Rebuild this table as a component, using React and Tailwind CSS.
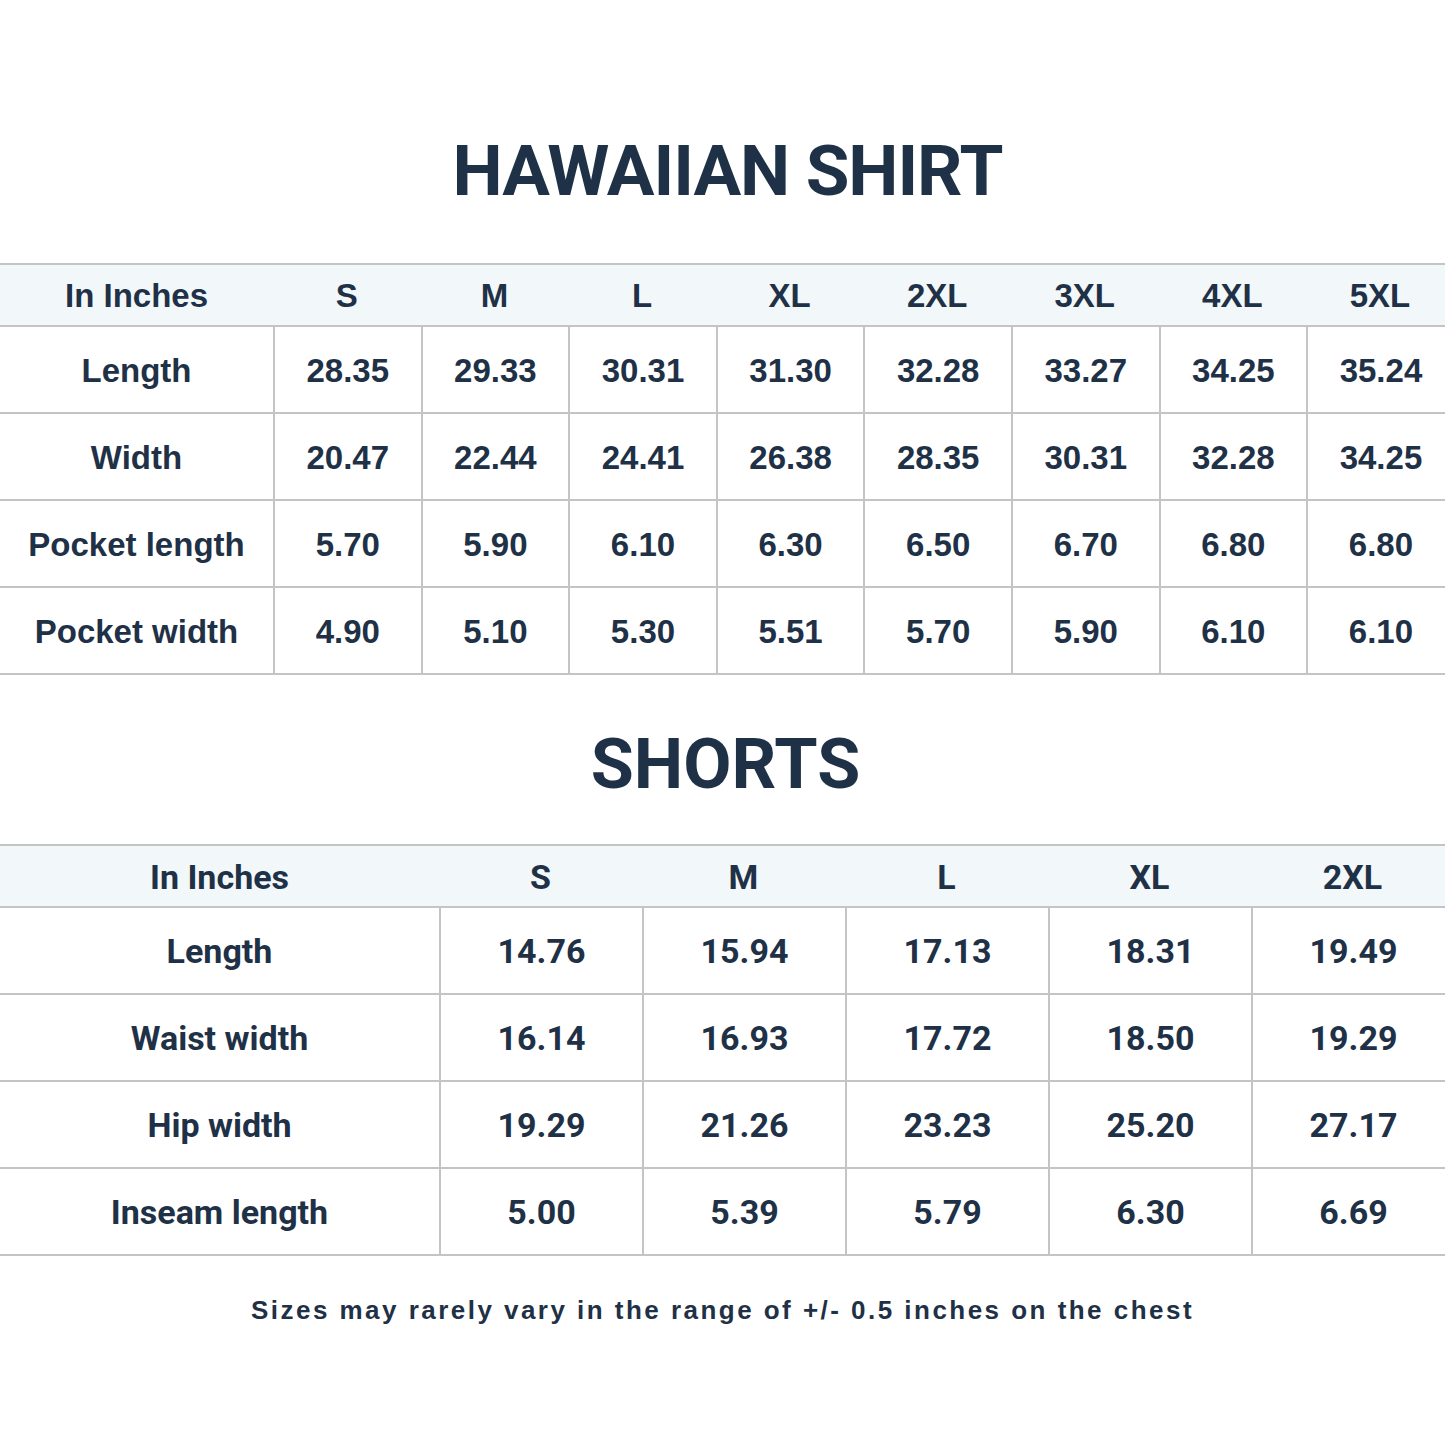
const shirtSizes = ['S', 'M', 'L', 'XL', '2XL', '3XL', '4XL', '5XL'];
const shirtRows = [
  ['Length', ['28.35', '29.33', '30.31', '31.30', '32.28', '33.27', '34.25', '35.24']],
  ['Width', ['20.47', '22.44', '24.41', '26.38', '28.35', '30.31', '32.28', '34.25']],
  ['Pocket length', ['5.70', '5.90', '6.10', '6.30', '6.50', '6.70', '6.80', '6.80']],
  ['Pocket width', ['4.90', '5.10', '5.30', '5.51', '5.70', '5.90', '6.10', '6.10']],
];

const shortsSizes = ['S', 'M', 'L', 'XL', '2XL'];
const shortsRows = [
  ['Length', ['14.76', '15.94', '17.13', '18.31', '19.49']],
  ['Waist width', ['16.14', '16.93', '17.72', '18.50', '19.29']],
  ['Hip width', ['19.29', '21.26', '23.23', '25.20', '27.17']],
  ['Inseam length', ['5.00', '5.39', '5.79', '6.30', '6.69']],
];

// Size chart table; it runs a bit past the right edge like the original artwork
const SizeTable = ({ sizes, rows, cols, condensed }) => (
  <div className={`grid w-max ${cols} ${condensed ? 'font-[Roboto,sans-serif]' : ''}`}>
    <div className="col-span-full grid grid-cols-subgrid h-[64px] bg-[#f2f7fa] border-y-2 border-[#c4c4c4]">
      <div className="flex items-center justify-center pt-[2px]">In Inches</div>
      {sizes.map((s) => (
        <div key={s} className="flex items-center justify-center pt-[2px]">{s}</div>
      ))}
    </div>
    {rows.map(([label, values]) => (
      <div key={label} className="col-span-full grid grid-cols-subgrid h-[87px] border-b-2 border-[#c4c4c4]">
        <div className="flex items-center justify-center pt-[2px]">{label}</div>
        {values.map((v, i) => (
          <div key={i} className="flex items-center justify-center pt-[2px] border-l-2 border-[#c4c4c4]">{v}</div>
        ))}
      </div>
    ))}
  </div>
);

export default function App() {
  return (
    <div className="w-[1445px] h-[1445px] bg-white text-[#1f3146] font-['Liberation_Sans',Arial,sans-serif] font-bold overflow-hidden">
      <div className="h-[263px] flex items-center justify-center pt-[77px]">
        <h1 className="text-[71px] leading-none tracking-[-0.015em] font-[Roboto,sans-serif] font-bold translate-x-[5px]">HAWAIIAN SHIRT</h1>
      </div>
      <div className="text-[33px]">
        <SizeTable sizes={shirtSizes} rows={shirtRows} cols="grid-cols-[273px_repeat(8,147.6px)]" />
      </div>
      <div className="h-[169px] flex items-center justify-center pt-[9px]">
        <h2 className="text-[70px] leading-none font-[Roboto,sans-serif] font-bold translate-x-[3px]">SHORTS</h2>
      </div>
      <div className="text-[34px]">
        <SizeTable sizes={shortsSizes} rows={shortsRows} cols="grid-cols-[439px_repeat(5,203px)]" condensed />
      </div>
      <div className="flex justify-center pt-[35px]">
        <p className="text-[26px] tracking-[0.095em]">Sizes may rarely vary in the range of +/- 0.5 inches on the chest</p>
      </div>
    </div>
  );
}
